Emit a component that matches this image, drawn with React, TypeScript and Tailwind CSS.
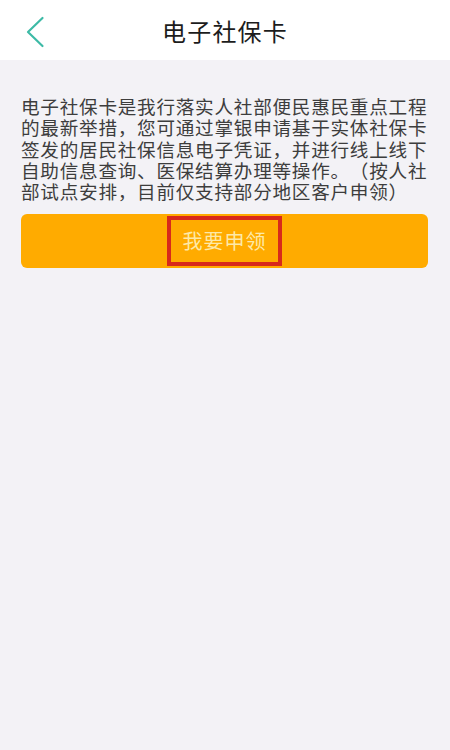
import React from "react";

const lines = [
  "电子社保卡是我行落实人社部便民惠民重点工程",
  "的最新举措，您可通过掌银申请基于实体社保卡",
  "签发的居民社保信息电子凭证，并进行线上线下",
  "自助信息查询、医保结算办理等操作。（按人社",
  "部试点安排，目前仅支持部分地区客户申领）",
];

export default function App() {
  const font = { fontFamily: '"Noto Sans CJK SC", "Noto Sans", sans-serif' };
  return (
    <div className="w-[450px] h-[750px] bg-[#f3f2f6] flex flex-col" style={font}>
      <div className="h-[60px] bg-white flex items-center relative shrink-0">
        <svg className="absolute left-[25px] top-[16px]" width="20" height="32" viewBox="0 0 20 32" fill="none">
          <path d="M17.5 2 L3 16 L17.5 30" stroke="#3dbaa6" strokeWidth="2.2" strokeLinecap="round" strokeLinejoin="round" />
        </svg>
        <div className="flex-1 text-center text-[24px] text-[#1c1c1c] leading-none tracking-[1.2px] pt-[2px]">电子社保卡</div>
      </div>
      <div className="px-[21px] pt-[35px]">
        <div className="text-[18.6px] leading-[21.3px] tracking-[0.75px] text-[#3d3d3d] [text-spacing-trim:space-all]">
          {lines.map((l, i) => (
            <div key={i} className="whitespace-nowrap h-[21.3px]">{l}</div>
          ))}
        </div>
        <div className="mt-[13px] h-[54px] w-[407px] rounded-[6px] bg-[#ffab00] flex items-center justify-center">
          <div className="w-[115px] h-[50px] border-[4px] border-[#d8291b] flex items-center justify-center">
            <span className="text-[20px] text-[#fde9a8] tracking-[1px] leading-none">我要申领</span>
          </div>
        </div>
      </div>
    </div>
  );
}
